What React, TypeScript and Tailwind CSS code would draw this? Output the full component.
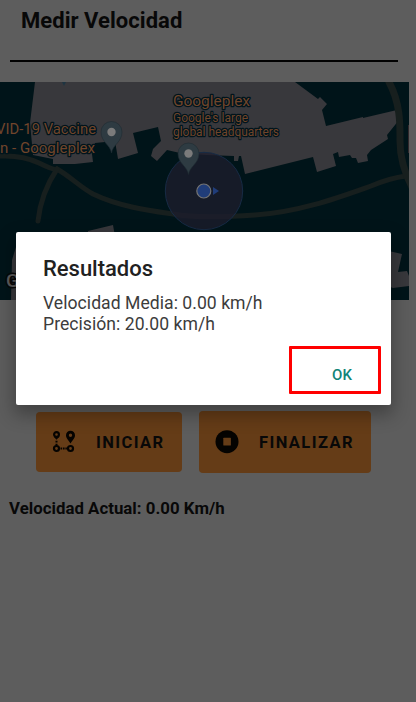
const label = 'Roboto, sans-serif';

function MapPin({ x, y }: { x: number; y: number }) {
  return (
    <g transform={`translate(${x} ${y})`}>
      <path d="M0 21C-1 13-10.500 10-10.500 0a10.500 10.500 0 0 1 21 0C10.500 10 1 13 0 21Z" fill="#2e3b42" stroke="#1e2b33" strokeWidth=".6" />
      <circle r="4.200" fill="#7b7b7b" />
    </g>
  );
}

function MapView() {
  return (
    <svg className="block h-[218px] w-[409px]" viewBox="0 0 409 218">
      <rect width="409" height="218" fill="#001419" />
      <path fill="#38383c" d="M35 0L30 41 33 73 53 77V82H75L93 80 92 72 95 61 115 59 118 77 138 71 133 51 158 45 161 59 153 67 151 74 157 79 167 68 180 71 206 73 234 74V79H238L239 74H241L245 92 313 75 317 90 336 84 333 72 338 70 339 75 350 73 352 76H356L358 81 368 79 367 73 371 68 388 57 387 53 399 38 397 28 363 36V35L326 44 322 28 327 22 320 15 318 17 295 0Z" />
      <path fill="#38383c" d="M88 149L113 143 116 160H88ZM16 165L12 178 11 218H30V150ZM380 167L402 172 398 190 407 189 409 194V204L393 206 380 201Z" />
      <g fill="none" stroke="#171f1e" strokeWidth="5" strokeLinecap="round">
        <path d="M0 74Q23 73 39 81T57 87C71 95 80 105 93 112C120 125 152 129 173 132Q200 137 255 133C300 130 340 115 371 104Q390 96 406 94" />
        <path d="M57 87Q41 111 38 139" />
        <path strokeWidth="7" d="M389 0C401 22 400 45 400 59Q400 83 413 107" />
      </g>
      <path d="M408.500 43V71" stroke="#30272b" />
      <path d="M62 0L64 4 66 0Z" fill="#1e3441" />
      <circle cx="204" cy="109" r="38.700" fill="#1d1e2e" fillOpacity=".75" stroke="#172b45" strokeWidth="1" />
      <MapPin x={111.500} y={50} />
      <MapPin x={188.500} y={71.500} />
      <circle cx="203.800" cy="109" r="7" fill="#203d79" stroke="#747474" strokeWidth="1.200" />
      <path d="M213 105L219 109 213 113Z" fill="#203d79" />
      <g fill="#70452a" stroke="#00141c" strokeWidth="2.500" strokeLinejoin="round" paintOrder="stroke" fontFamily={label}>
        <text x="-4" y="52" fontSize="15" textLength="100" lengthAdjust="spacingAndGlyphs">VID-19 Vaccine</text>
        <text x="0" y="70.500" fontSize="15" textLength="95" lengthAdjust="spacingAndGlyphs">n - Googleplex</text>
        <text x="173" y="24" fontSize="15" textLength="77" lengthAdjust="spacingAndGlyphs">Googleplex</text>
        <text x="173" y="39.500" fontSize="13" textLength="75" lengthAdjust="spacingAndGlyphs">Google's large</text>
        <text x="173" y="54" fontSize="13" textLength="106" lengthAdjust="spacingAndGlyphs">global headquarters</text>
      </g>
      <text x="6" y="204.500" fontSize="19" fontWeight="500" fill="#5c5c5c" stroke="#080808" strokeWidth="3" paintOrder="stroke" fontFamily={label}>G</text>
    </svg>
  );
}

function RouteIcon() {
  return (
    <svg className="h-6 w-6 shrink-0" viewBox="0 0 24 24" fill="none" stroke="#050301">
      <circle cx="4.500" cy="4.500" r="2.400" strokeWidth="2.200" />
      <path d="M2 7L4.500 9.700 7 7Z" fill="#050301" stroke="none" />
      <circle cx="4.500" cy="18.500" r="2.500" strokeWidth="2.200" />
      <circle cx="18.500" cy="18.500" r="2.500" strokeWidth="2.200" />
      <path d="M4.500 10.800v1.800M4.500 13.700v1.600M8.500 18.500h1.500M10.800 18.500h1.800M13.400 18.500h1.500" strokeWidth="2" />
      <path d="M18.500 13.500C17 10.700 14 8.500 14 5.300a4.500 4.500 0 0 1 9 0C23 8.500 20 10.700 18.500 13.500ZM18.500 3.500a1.700 1.700 0 1 0 0 3.400 1.700 1.700 0 0 0 0-3.400Z" fill="#050301" fillRule="evenodd" stroke="none" />
    </svg>
  );
}

function StopIcon() {
  return (
    <svg className="h-6 w-6 shrink-0" viewBox="0 0 24 24">
      <circle cx="12" cy="11.700" r="11.500" fill="#050301" />
      <rect x="8.300" y="7.800" width="7.600" height="7.600" rx=".5" fill="#653c17" />
    </svg>
  );
}

function ResultDialog() {
  return (
    <section role="dialog" className="absolute top-[232px] left-4 flex h-[173px] w-[375px] flex-col rounded-[2px] bg-white pt-[23px] pl-[27px] shadow-[0_8px_18px_2px_rgba(0,0,0,0.3)]">
      <h2 className="text-[22px] leading-[28px] font-medium tracking-[-0.02px] whitespace-nowrap text-[#212121]">Resultados</h2>
      <p className="mt-[10px] text-[17.600px] leading-[21px] tracking-[0.03px] whitespace-nowrap text-[#3c3c3c]">
        Velocidad Media: 0.00 km/h<br />Precisión: 20.00 km/h
      </p>
      <button className="mt-[11px] ml-[246px] flex h-12 w-[92px] shrink-0 items-center justify-center rounded-[1px] border-[3px] border-[#ff0000] pt-[11px] pl-[14px] text-[15px] font-medium tracking-[0.2px] text-[#108477]">OK</button>
    </section>
  );
}

export default function App() {
  return (
    <main className="relative flex h-[702px] w-[416px] flex-col overflow-hidden bg-[#5d5d5d] font-[Roboto,sans-serif] text-[#080808]">
      <header className="mx-[10px] flex h-[60px] w-[388px] shrink-0 items-start pt-[6px] pl-[11px]">
        <h1 className="text-[22px] leading-[30px] font-bold tracking-[0.04px]">Medir Velocidad</h1>
      </header>
      <div className="ml-[10px] h-[2px] w-[388px] shrink-0 bg-[#020202]" />
      <div className="mt-[20px] h-[218px] shrink-0"><MapView /></div>
      <div className="mt-[110px] ml-9 flex h-[63px] shrink-0 items-center gap-[17px]">
        <button className="flex h-[60px] w-[146px] items-center gap-[20px] rounded-[4px] bg-[#653c17] pl-4 text-[16.500px] font-bold tracking-[1.400px]">
          <RouteIcon /><span className="pt-[3px]">INICIAR</span>
        </button>
        <button className="flex h-[62px] w-[172px] items-center gap-[20px] rounded-[4px] bg-[#653c17] pl-4 text-[16.500px] font-bold tracking-[1.400px]">
          <StopIcon /><span className="pt-[3px]">FINALIZAR</span>
        </button>
      </div>
      <p className="mt-[23px] ml-[9px] text-[16.800px] leading-6 font-bold tracking-[0.03px]">Velocidad Actual: 0.00 Km/h</p>
      <ResultDialog />
    </main>
  );
}
